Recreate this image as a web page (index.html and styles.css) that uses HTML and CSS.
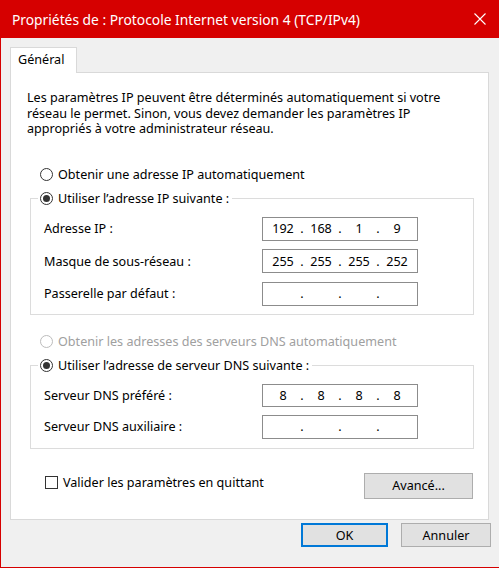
FILE: index.html
```html
<!DOCTYPE html>
<html lang="fr">
<head>
<meta charset="utf-8">
<title>Propriétés de : Protocole Internet version 4 (TCP/IPv4)</title>
<link rel="stylesheet" href="styles.css">
</head>
<body>
<div class="window">
  <div class="titlebar">
    <span class="title">Propriétés de : Protocole Internet version 4 (TCP/IPv4)</span>
    <svg class="close" width="12" height="12" viewBox="0 0 12 12"><path d="M0.5 0.5L11.5 11.5M11.5 0.5L0.5 11.5" stroke="#fff" stroke-width="1.1" fill="none"/></svg>
  </div>
  <div class="content">
    <div class="tabs"><div class="tab">Général</div></div>
    <div class="panel">
      <p class="intro">Les paramètres IP peuvent être déterminés automatiquement si votre<br>réseau le permet. Sinon, vous devez demander les paramètres IP<br>appropriés à votre administrateur réseau.</p>

      <div class="option first"><span class="radio"></span><span>Obtenir une adresse IP automatiquement</span></div>

      <fieldset class="group g1">
        <legend class="option"><span class="radio checked"></span><span>Utiliser l’adresse IP suivante :</span></legend>
        <div class="rows r1">
          <div class="row"><span class="label">Adresse IP :</span><div class="ip"><span class="oct">192</span><span class="dot">.</span><span class="oct">168</span><span class="dot">.</span><span class="oct">1</span><span class="dot">.</span><span class="oct">9</span></div></div>
          <div class="row"><span class="label">Masque de sous-réseau :</span><div class="ip"><span class="oct">255</span><span class="dot">.</span><span class="oct">255</span><span class="dot">.</span><span class="oct">255</span><span class="dot">.</span><span class="oct">252</span></div></div>
          <div class="row"><span class="label">Passerelle par défaut :</span><div class="ip"><span class="oct"></span><span class="dot">.</span><span class="oct"></span><span class="dot">.</span><span class="oct"></span><span class="dot">.</span><span class="oct"></span></div></div>
        </div>
      </fieldset>

      <div class="option disabled dnsauto"><span class="radio"></span><span>Obtenir les adresses des serveurs DNS automatiquement</span></div>

      <fieldset class="group g2">
        <legend class="option"><span class="radio checked"></span><span>Utiliser l’adresse de serveur DNS suivante :</span></legend>
        <div class="rows r2">
          <div class="row"><span class="label">Serveur DNS préféré :</span><div class="ip"><span class="oct">8</span><span class="dot">.</span><span class="oct">8</span><span class="dot">.</span><span class="oct">8</span><span class="dot">.</span><span class="oct">8</span></div></div>
          <div class="row"><span class="label">Serveur DNS auxiliaire :</span><div class="ip"><span class="oct"></span><span class="dot">.</span><span class="oct"></span><span class="dot">.</span><span class="oct"></span><span class="dot">.</span><span class="oct"></span></div></div>
        </div>
      </fieldset>

      <div class="footer-row">
        <div class="check-option"><span class="checkbox"></span><span>Valider les paramètres en quittant</span></div>
        <button class="btn advanced">Avancé...</button>
      </div>
    </div>
    <div class="actions">
      <button class="btn ok">OK</button>
      <button class="btn cancel">Annuler</button>
    </div>
  </div>
</div>
</body>
</html>
```
FILE: styles.css
```css
* { box-sizing: border-box; }
html, body {
  margin: 0;
  padding: 0;
}
body {
  width: 499px;
  height: 569px;
  overflow: hidden;
  background: #ffffff;
  font-family: "Noto Sans", "Open Sans", sans-serif;
  font-size: 12.6px;
  color: #000;
}
.window {
  width: 499px;
  height: 568px;
  background: #f0f0f0;
  border-left: 1px solid #d60000;
  border-bottom: 1px solid #d60000;
  display: flex;
  flex-direction: column;
}
.titlebar {
  height: 38px;
  background: #d60000;
  color: #fff;
  display: flex;
  align-items: center;
  justify-content: space-between;
  padding: 0 13px 0 11px;
  font-size: 13.8px;
}
.title { white-space: nowrap; }
.close { display: block; }
.content {
  padding: 9px 0 0 9px;
  display: flex;
  flex-direction: column;
}
.tabs {
  display: flex;
  height: 25px;
  position: relative;
  z-index: 1;
}
.tab {
  width: 67px;
  height: 26px;
  background: #fff;
  border: 1px solid #d9d9d9;
  border-bottom: none;
  padding: 4px 0 0 7px;
  line-height: 16px;
}
.panel {
  width: 479px;
  height: 448px;
  background: #fff;
  border: 1px solid #d9d9d9;
  display: flex;
  flex-direction: column;
  padding: 0;
}
.intro {
  margin: 17px 0 0 16px;
  line-height: 15.5px;
  white-space: nowrap;
}
.option {
  display: flex;
  align-items: center;
  height: 16px;
  line-height: 16px;
  white-space: nowrap;
}
.option.first { margin: 30px 0 0 29px; }
.radio {
  width: 13px;
  height: 13px;
  border: 1px solid #333;
  border-radius: 50%;
  background: #fff;
  margin-right: 5px;
  display: flex;
  align-items: center;
  justify-content: center;
  flex: none;
}
.radio.checked::after {
  content: "";
  width: 7px;
  height: 7px;
  border-radius: 50%;
  background: #333;
}
.option.disabled { color: #a0a0a0; }
.option.disabled .radio { border-color: #bcbcbc; }
.group {
  margin: 8px 14px 0 19px;
  padding: 0;
  border: 1px solid #dcdcdc;
  min-width: 0;
}
.group legend {
  margin-left: 7px;
  padding: 0 3px 0 2px;
}
.rows {
  display: flex;
  flex-direction: column;
  padding: 10px 0 8px 13px;
}
.r1 { gap: 8.5px; }
.r2 { gap: 8px; padding-bottom: 9px; }
.row {
  display: flex;
  align-items: center;
}
.label {
  width: 218px;
  white-space: nowrap;
}
.ip {
  width: 156px;
  height: 24px;
  border: 1px solid #8c8c8c;
  background: #fff;
  display: flex;
  align-items: center;
  padding: 0 5px;
}
.r2 .ip { height: 23.5px; }
.oct {
  width: 30px;
  text-align: center;
}
.dot {
  width: 8px;
  text-align: center;
}
.dnsauto { margin: 19px 0 0 29px; }
.footer-row {
  display: flex;
  justify-content: space-between;
  align-items: flex-start;
  margin: 24px 15px 0 34px;
}
.check-option {
  display: flex;
  align-items: center;
  margin-top: 1px;
  white-space: nowrap;
}
.checkbox {
  width: 13px;
  height: 13px;
  border: 1px solid #333;
  background: #fff;
  margin-right: 5px;
}
.btn {
  font-family: inherit;
  font-size: 12.6px;
  color: #000;
  background: #e1e1e1;
  border: 1px solid #adadad;
  padding: 0;
  border-radius: 0;
}
.advanced {
  width: 109px;
  height: 26px;
}
.actions {
  display: flex;
  justify-content: flex-end;
  gap: 13px;
  margin: 3px 8px 0 0;
}
.ok {
  width: 87px;
  height: 24px;
  border: 1px solid #0078d7;
  box-shadow: inset 0 0 0 1px #0078d7;
}
.cancel {
  width: 90px;
  height: 24px;
}
```
